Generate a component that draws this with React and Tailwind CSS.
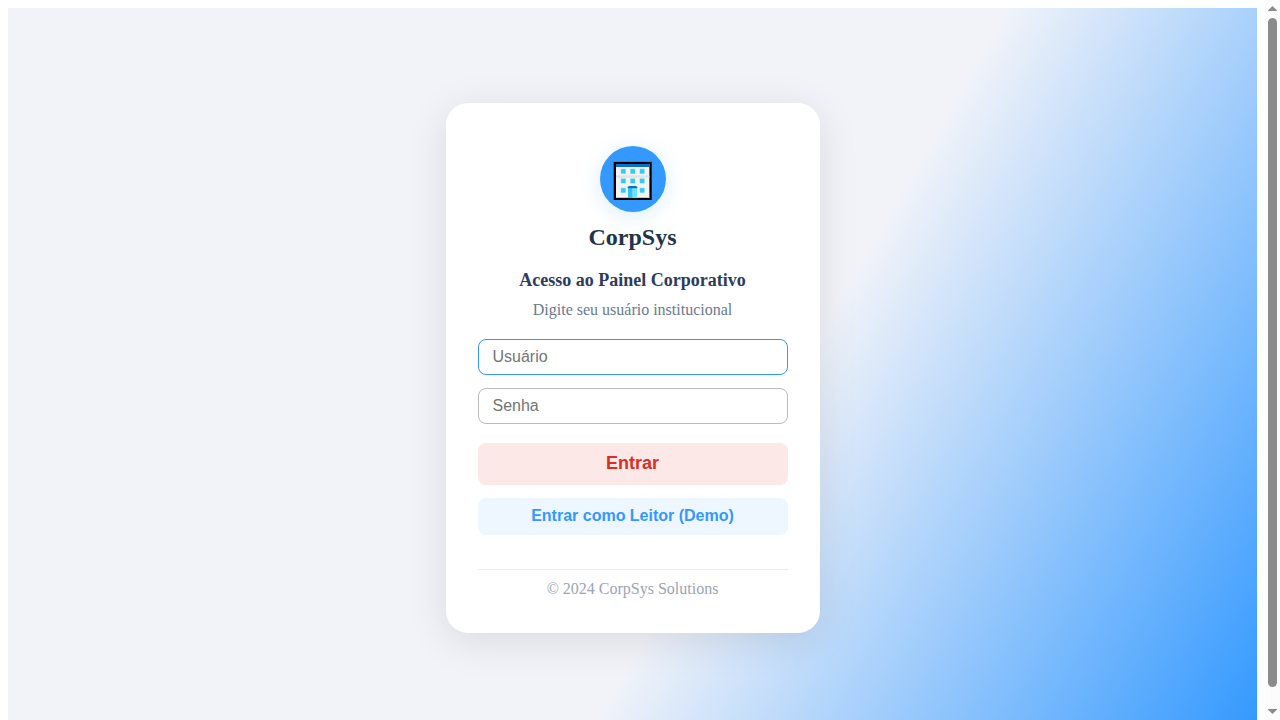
const windows = [23, 32.6, 42].flatMap((y) => [21, 30.4, 39.8].map((x) => ({ x, y })))
  .filter(({ x, y }) => !(x === 30.4 && y === 42));

function BuildingLogo() {
  return (
    <svg viewBox="0 0 66 66" className="block size-full" aria-hidden="true">
      <rect x="13.7" y="15.9" width="38" height="38.1" fill="#000" />
      <rect x="16" y="18" width="33.4" height="34" fill="#f3f3f3" />
      <rect x="16" y="18" width="33.4" height="3" fill="#0871cf" />
      <rect x="16" y="29.4" width="33.4" height="2.2" fill="#e2e2e2" />
      <rect x="16" y="51" width="33.4" height="1" fill="#c8c8c8" />
      {windows.map(({ x, y }) => (
        <g key={`${x}-${y}`}>
          <rect x={x - 0.4} y={y - 0.4} width="5.4" height="5.4" fill="#b5e6ee" />
          <rect x={x + 0.2} y={y + 0.2} width="4.3" height="4.3" fill="#2fcdf5" />
        </g>
      ))}
      <rect x="28" y="41" width="4.7" height="11" fill="#2bc7f2" />
      <rect x="32.7" y="41" width="4.3" height="11" fill="#66e5fc" />
      <rect x="27.7" y="40.6" width="9.6" height="1.6" fill="#0871cf" />
      <rect x="28.7" y="40" width="7.6" height="1" fill="#0871cf" />
    </svg>
  );
}

function ScrollRail() {
  return (
    <div className="flex w-[15px] shrink-0 flex-col items-center justify-between bg-[#fcfcfc] py-[6px]" aria-hidden="true">
      <svg viewBox="0 0 9 5" className="h-[5px] w-[9px] shrink-0"><path d="M4.5 0 9 4.5V5H0V4.500Z" fill="#8b8b8b" /></svg>
      <div className="mt-[7px] mb-[22px] w-[9px] flex-1 rounded-full bg-[#8b8b8b]" />
      <svg viewBox="0 0 9 5" className="h-[5px] w-[9px] shrink-0"><path d="M4.5 5 9 .5V0H0V.5Z" fill="#8b8b8b" /></svg>
    </div>
  );
}

const field =
  "block h-9 w-full rounded-lg border bg-white px-[14px] font-['Liberation_Sans',Arial,sans-serif] text-base text-[#22304a] outline-none placeholder:text-[#757575]";
const button =
  "block w-full rounded-lg pb-[2px] font-['Liberation_Sans',Arial,sans-serif] font-bold";

export default function App() {
  return (
    <div className="flex h-screen overflow-hidden bg-white font-['Liberation_Serif','Times_New_Roman',serif]">
      <div className="min-w-0 flex-1 p-2">
        <main className="flex min-h-screen items-center justify-center bg-[linear-gradient(120deg,#f1f3f9_60%,#3399ff_100%)]">
          <section className="w-full max-w-[374px] rounded-[22px] bg-white px-8 pt-[43px] pb-[34px] text-center shadow-[0_8px_40px_rgba(0,0,0,0.1)]">
            <div className="mx-auto size-[66px] rounded-full bg-[#3399ff] shadow-[0_4px_20px_rgba(51,153,255,0.18)]">
              <BuildingLogo />
            </div>
            <div className="mt-[10px] text-2xl leading-[30px] font-bold text-[#22334a]">CorpSys</div>
            <h1 className="mt-[18px] text-lg leading-5 font-bold text-[#2d3c5e]">Acesso ao Painel Corporativo</h1>
            <p className="mt-[10px] text-base leading-5 text-[#6b7a90]">Digite seu usuário institucional</p>
            <form className="mt-[19px]" onSubmit={(e) => e.preventDefault()}>
              <input type="text" aria-label="Usuário" placeholder="Usuário" className={`${field} border-[#3399ff]`} />
              <input type="password" aria-label="Senha" placeholder="Senha" className={`${field} mt-[13px] border-[#bbbbbb]`} />
              <button type="submit" className={`${button} mt-[19px] h-[42px] bg-[#fce8e6] text-lg text-[#d93025]`}>Entrar</button>
              <button type="button" className={`${button} mt-[13px] h-[37px] bg-[#eef6ff] text-base text-[#3399ff]`}>Entrar como Leitor (Demo)</button>
            </form>
            <footer className="mt-[34px] border-t border-[#e9eef3] pt-[9px] text-base leading-5 text-[#9aa5b5]">© 2024 CorpSys Solutions</footer>
          </section>
        </main>
      </div>
      <ScrollRail />
    </div>
  );
}
